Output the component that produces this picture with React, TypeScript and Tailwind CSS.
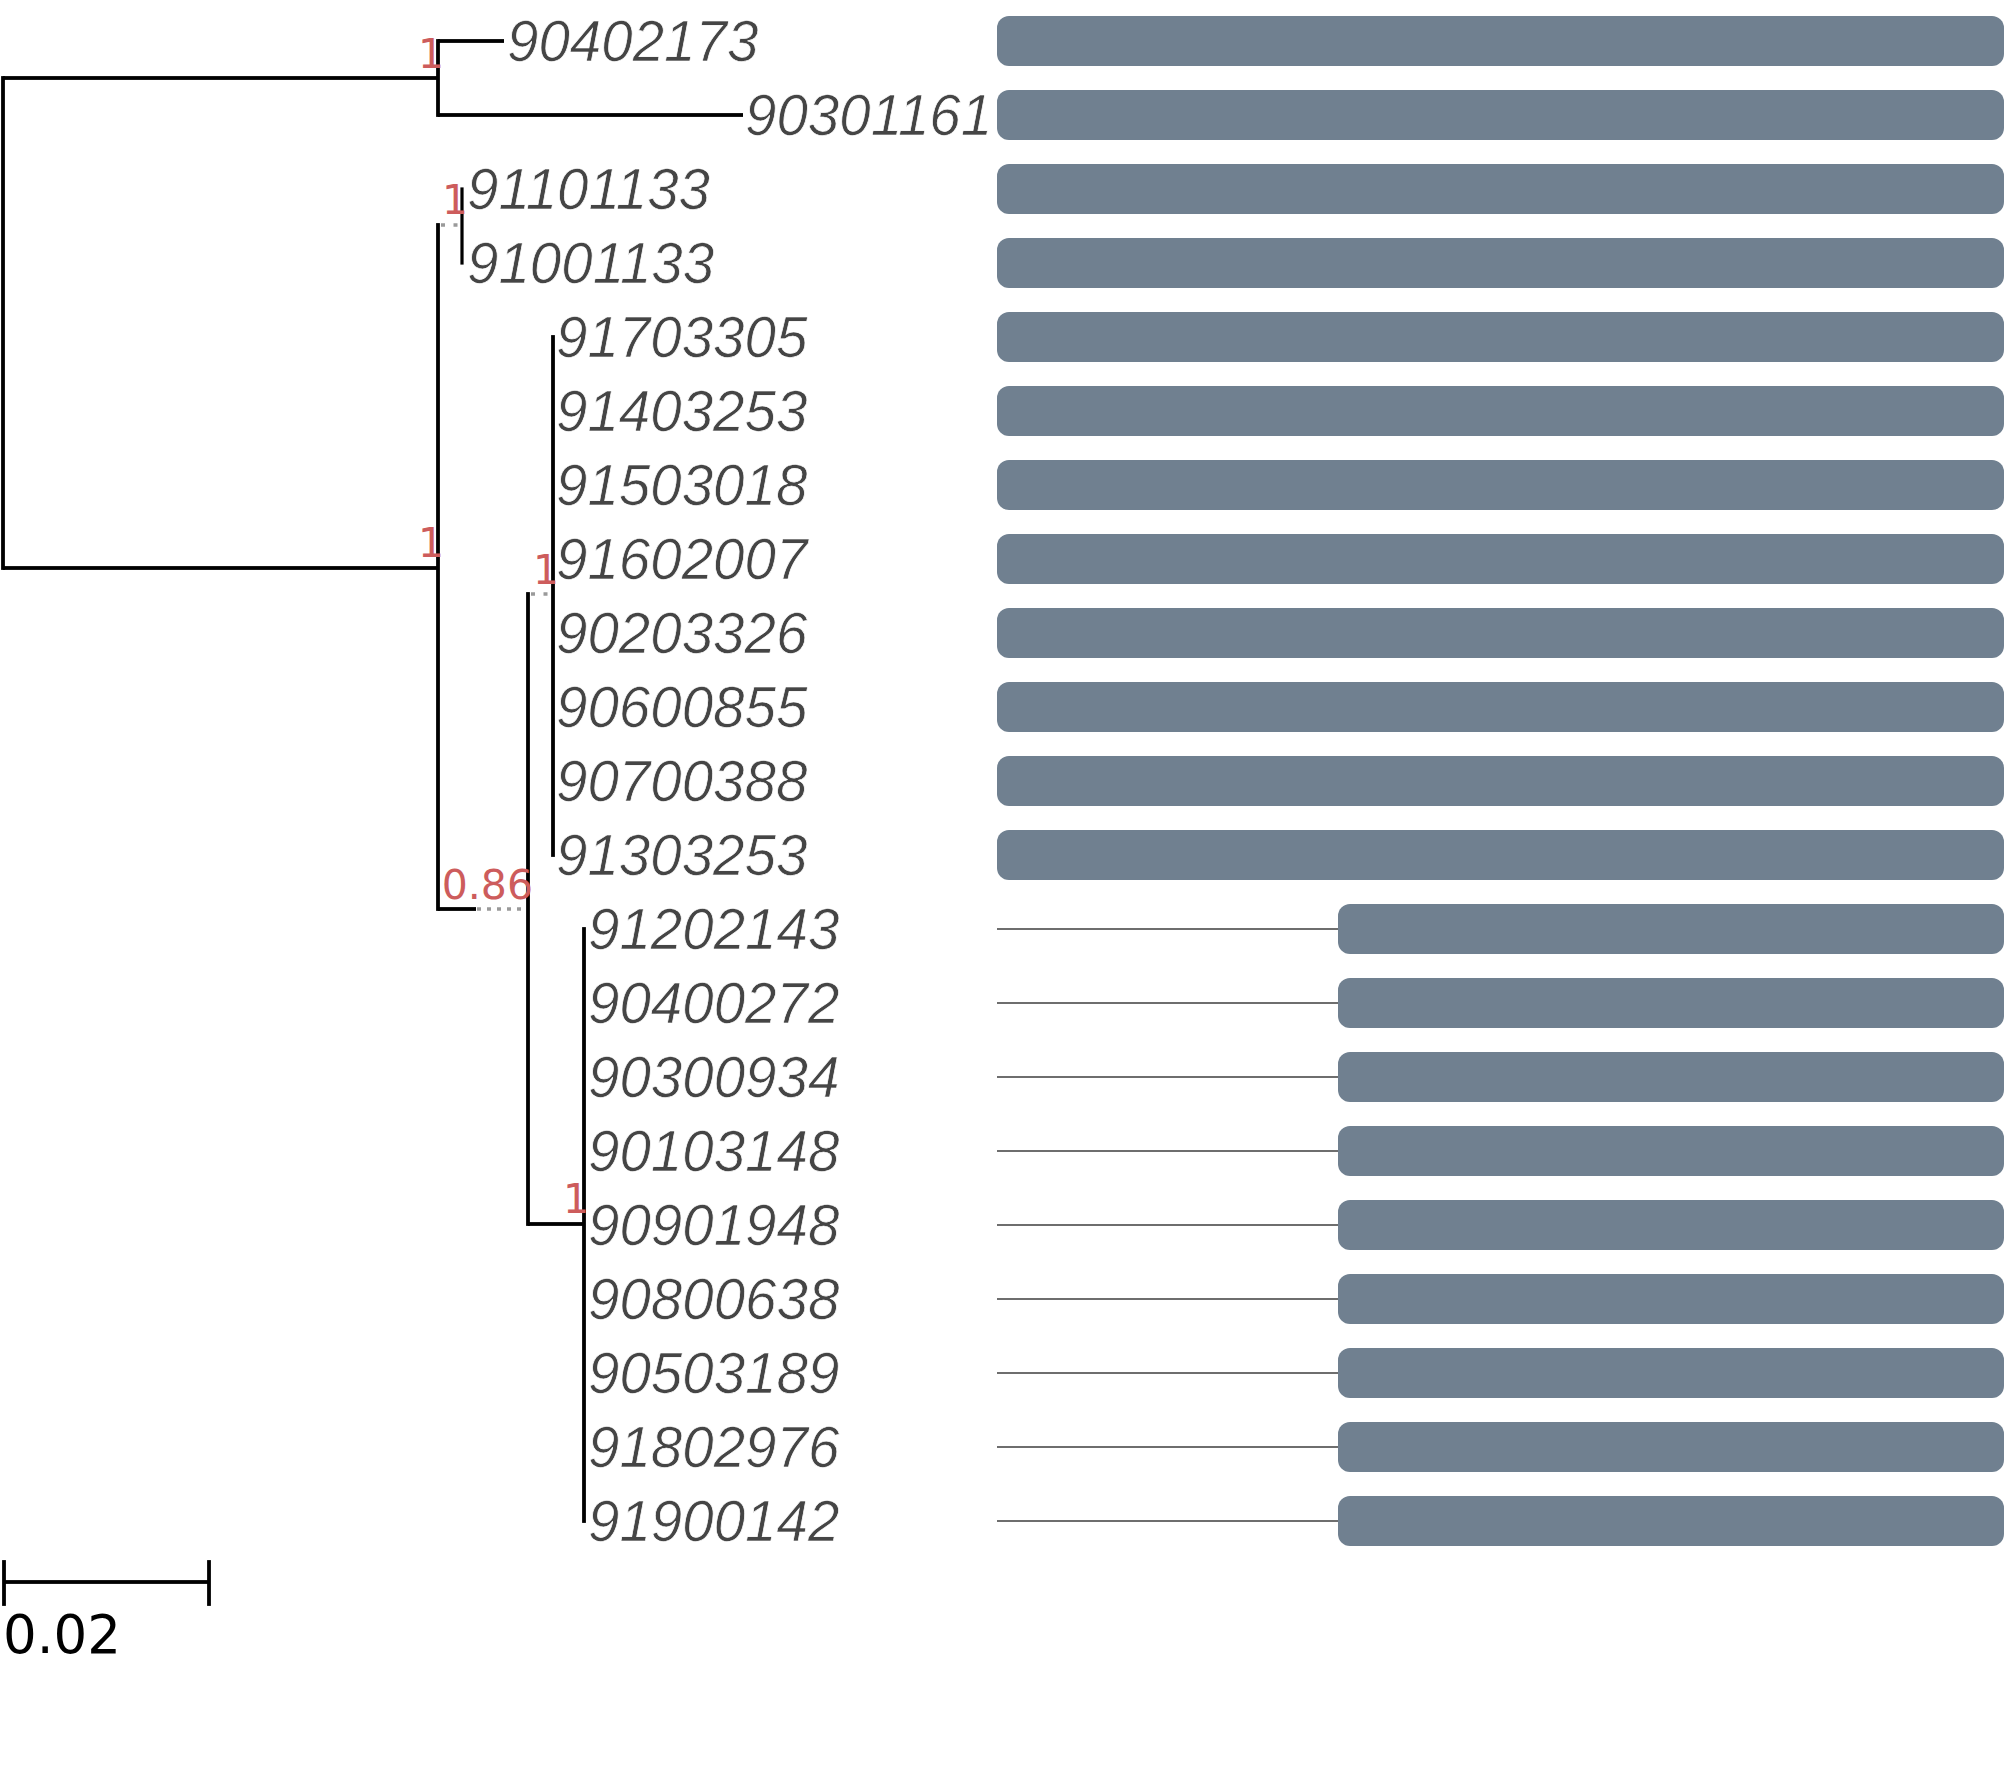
import React from "react";

const labels = [
  "90402173", "90301161", "91101133", "91001133", "91703305", "91403253",
  "91503018", "91602007", "90203326", "90600855", "90700388", "91303253",
  "91202143", "90400272", "90300934", "90103148", "90901948", "90800638",
  "90503189", "91802976", "91900142",
];

const rowY = (i: number) => 41 + 74 * i;

const labelX = (i: number) => {
  if (i === 0) return 507;
  if (i === 1) return 745;
  if (i <= 3) return 467;
  if (i <= 11) return 556;
  return 588;
};

const W = 3.8;

function H({ x1, x2, y, w = W }: { x1: number; x2: number; y: number; w?: number }) {
  return <rect x={x1} y={y - w / 2} width={x2 - x1} height={w} fill="#000" />;
}
function V({ x, y1, y2, w = W }: { x: number; y1: number; y2: number; w?: number }) {
  return <rect x={x - w / 2} y={y1 - w / 2} width={w} height={y2 - y1 + w} fill="#000" />;
}
function Dot({ x1, x2, y, dash }: { x1: number; x2: number; y: number; dash: string }) {
  return (
    <line x1={x1} x2={x2} y1={y} y2={y} stroke="#9a9a9a" strokeWidth={3.5} strokeDasharray={dash} />
  );
}
function Sup({ x, y, t }: { x: number; y: number; t: string }) {
  return (
    <text
      x={x}
      y={y}
      textAnchor="end"
      fill="#cd5c5c"
      fontSize={41}
      fontFamily="'DejaVu Sans', sans-serif"
    >
      {t}
    </text>
  );
}

function Tree() {
  return (
    <svg width={997} height={1765} viewBox="0 0 997 1765" className="shrink-0 block">
      {/* root */}
      <V x={3} y1={78} y2={568} />
      <H x1={3} x2={438} y={78} />
      <H x1={3} x2={438} y={568} />
      {/* node A */}
      <V x={438} y1={41} y2={115} />
      <H x1={438} x2={504} y={41} />
      <H x1={438} x2={743} y={115} />
      {/* node B */}
      <V x={438} y1={225} y2={909} />
      {/* node C */}
      <Dot x1={441} x2={460} y={225} dash="4 8.5" />
      <V x={462} y1={189} y2={263} w={3.2} />
      {/* node D */}
      <H x1={438} x2={476} y={909} />
      <Dot x1={477} x2={526} y={909} dash="4 6" />
      <V x={528} y1={594} y2={1224} />
      {/* node E */}
      <Dot x1={531} x2={551} y={594} dash="4 8.5" />
      <V x={553} y1={337} y2={855} />
      {/* node F */}
      <H x1={528} x2={584} y={1224} />
      <V x={584} y1={929} y2={1521} />

      {/* support values */}
      <Sup x={444} y={68} t="1" />
      <Sup x={468} y={214} t="1" />
      <Sup x={444} y={557} t="1" />
      <Sup x={559} y={584} t="1" />
      <Sup x={533} y={899} t="0.86" />
      <Sup x={589} y={1213} t="1" />

      {/* labels */}
      {labels.map((l, i) => (
        <text
          key={l}
          x={labelX(i)}
          y={rowY(i) + 20}
          fill="#454545"
          stroke="#ffffff"
          strokeWidth={0.7}
          fontSize={56.5}
          fontStyle="italic"
          fontFamily="'Liberation Sans', Arial, sans-serif"
        >
          {l}
        </text>
      ))}

      {/* scale bar */}
      <H x1={4} x2={209} y={1582} />
      <V x={4} y1={1562} y2={1604} />
      <V x={209} y1={1562} y2={1604} />
      <text x={3} y={1653} fill="#000" fontSize={53} fontFamily="'DejaVu Sans', sans-serif">
        0.02
      </text>
    </svg>
  );
}

export default function App() {
  return (
    <div className="w-[2007px] h-[1765px] bg-white flex">
      <Tree />
      <div className="flex flex-col pt-[4px] w-[1007px]">
        {labels.map((l, i) => (
          <div key={l} className="h-[74px] flex items-center">
            {i < 12 ? (
              <div className="flex-1 h-[50px] rounded-[12px] bg-[#708090]" />
            ) : (
              <>
                <div className="flex-1 h-[2px] bg-[#6e6e6e]" />
                <div className="w-[666px] h-[50px] rounded-[12px] bg-[#708090]" />
              </>
            )}
          </div>
        ))}
      </div>
    </div>
  );
}
